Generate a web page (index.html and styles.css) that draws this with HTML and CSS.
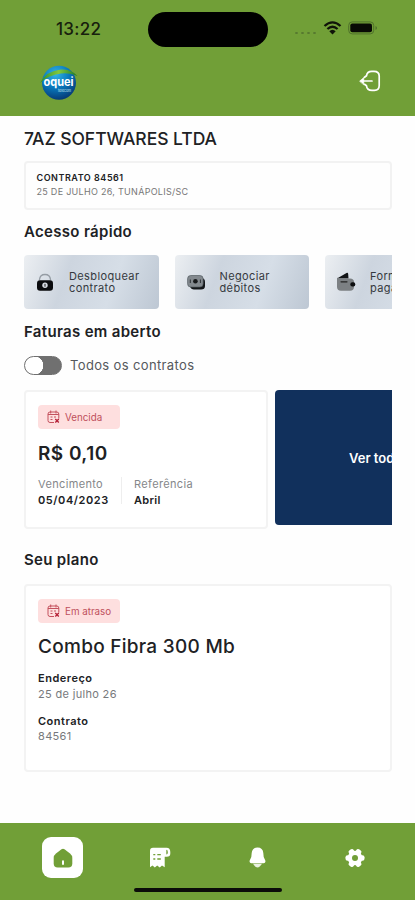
FILE: index.html
```html
<!DOCTYPE html>
<html lang="pt-BR">
<head>
<meta charset="utf-8">
<title>Oquei</title>
<link rel="stylesheet" href="styles.css">
</head>
<body>
<header class="header">
  <div class="status">
    <span class="time">13:22</span>
    <span class="island"></span>
    <span class="signals">
      <i class="cell"><b></b><b></b><b></b><b></b></i>
      <svg class="wifi" width="19" height="14" viewBox="0 0 19 14"><path d="M1.500 5Q9.500-2.300 17.500 5M4.400 8Q9.500 3.400 14.600 8" fill="none" stroke="#101409" stroke-width="2.300"/><path d="M6.300 10.300Q9.500 7.300 12.700 10.300L9.500 13.600Z" fill="#101409"/></svg>
      <svg class="battery" width="30" height="14" viewBox="0 0 30 14"><rect x=".7" y=".9" width="25" height="12" rx="3.500" fill="none" stroke="#4f712b" stroke-width="1"/><rect x="2.300" y="2.500" width="21.700" height="8.800" rx="2" fill="#080a05"/><path d="M27.500 5v4q1.500-.6 1.500-2t-1.500-2Z" fill="#4f712b"/></svg>
    </span>
  </div>
  <div class="topbar">
    <svg class="logo" width="40" height="36" viewBox="0 0 40 36">
      <defs><radialGradient id="globe" cx=".4" cy=".25" r=".8"><stop offset="0" stop-color="#35b4e4"/><stop offset=".5" stop-color="#0878bc"/><stop offset="1" stop-color="#06346f"/></radialGradient>
      <linearGradient id="leaf"><stop offset="0" stop-color="#278c32"/><stop offset=".5" stop-color="#83c83d"/><stop offset="1" stop-color="#19772d"/></linearGradient></defs>
      <circle cx="20" cy="17.700" r="17" fill="url(#globe)"/>
      <path d="M1 18Q7 6 22 4.500 32 3.500 38.500 11 31 7.500 22 8.500 9 10 1 18Z" fill="url(#leaf)"/>
      <text x="4.500" y="21" class="logo-name" textLength="30" lengthAdjust="spacingAndGlyphs">oquei</text>
      <text x="19" y="26.500" class="logo-sub" textLength="13" lengthAdjust="spacingAndGlyphs">telecom</text>
    </svg>
    <svg class="logout" width="22" height="22" viewBox="0 0 22 22" fill="none" stroke="#fff" stroke-width="1.700" stroke-linecap="round" stroke-linejoin="round"><path d="M5.500 7.300 7.500 5.800Q8 1.300 12.800 1.300H15Q20.200 1.300 20.200 6V15.500Q20.200 20.300 15.500 20.300H13Q8 20.300 7.500 15.800L5.500 14.300"/><path d="M2 11H13"/><path d="m.8 11 4-3.500v7Z" fill="#fff" stroke-width=".6"/></svg>
  </div>
</header>

<main class="content">
  <h1 class="company">7AZ SOFTWARES LTDA</h1>
  <section class="contract">
    <strong>CONTRATO 84561</strong>
    <span>25 DE JULHO 26, TUNÁPOLIS/SC</span>
  </section>

  <h2 class="heading quick-title">Acesso rápido</h2>
  <div class="quick">
    <div class="quick-card">
      <svg width="18" height="20" viewBox="0 0 18 20"><path d="M3.500 8.300V7.500Q4 2.500 9 2.500T14.500 7.500V8.300" fill="none" stroke="#959ca4" stroke-width="1.300"/><rect x="1" y="8.300" width="16" height="10.400" rx="3" fill="#0b0c0e"/><circle cx="9" cy="13.300" r="2.700" fill="#d7dce2"/><path d="M9 11.900v2.800" stroke="#222" stroke-width="1"/></svg>
      <span>Desbloquear<br>contrato</span>
    </div>
    <div class="quick-card">
      <svg width="18" height="20" viewBox="0 0 18 20"><path d="M5 6h9q4 0 4 4v4q0 3.500-4 3.500H7q-3 0-4-3Z" fill="#14171a"/><rect x=".6" y="3.500" width="15.500" height="11.500" rx="3.200" fill="#83898e" stroke="#555d63" stroke-width=".7"/><circle cx="8.400" cy="9.200" r="2.300" fill="#17191b"/><path d="M3.300 7.500v3.500M13.400 7.500v3.500" stroke="#303539" stroke-width="1"/></svg>
      <span>Negociar<br>débitos</span>
    </div>
    <div class="quick-card">
      <svg width="20" height="20" viewBox="0 0 20 20"><path d="M1 6.500 10.500 1q1.500-.6 1.700 1l.3 4.500Z" fill="#111315"/><path d="M1 5.500Q2 6.500 4 6.500H14Q18 6.500 18 10V15Q18 18.700 14 18.700H5Q1 18.700 1 15Z" fill="#7c8083"/><path d="M5 9.800h6" stroke="#222" stroke-width="1.200" stroke-linecap="round"/><rect x="14.300" y="10.300" width="5" height="4.200" rx="2" fill="#0c0e10"/></svg>
      <span>Formas de<br>pagamento</span>
    </div>
  </div>

  <h2 class="heading bills-title">Faturas em aberto</h2>
  <div class="filter"><span class="switch"></span><span class="filter-label">Todos os contratos</span></div>
  <div class="bills">
    <article class="card bill">
      <div class="badge">
        <svg width="13" height="14" viewBox="0 0 13 14" fill="none" stroke="#c4515d" stroke-width="1"><path d="M7 12.500H3Q1 12.500 1 10.500V4Q1 2 3 2H9.700Q11.800 2 11.800 4V8.500M3.700.5v3M9 .5v3M1 4.500h10.800M3.500 7h2M7 7h2M3.500 9.500h2"/><path d="m8.300 9 3.500 3.500m0-3.500-3.500 3.500" stroke="#b51f36" stroke-width="1.300"/></svg>
        <span class="overdue">Vencida</span>
      </div>
      <strong class="amount">R$ 0,10</strong>
      <div class="details">
        <div class="detail due"><span>Vencimento</span><strong>05/04/2023</strong></div>
        <div class="detail ref"><span>Referência</span><strong>Abril</strong></div>
      </div>
    </article>
    <div class="see-all"><span>Ver todas</span></div>
  </div>

  <h2 class="heading plan-title">Seu plano</h2>
  <article class="card plan">
    <div class="badge">
      <svg width="13" height="14" viewBox="0 0 13 14" fill="none" stroke="#c4515d" stroke-width="1"><path d="M7 12.500H3Q1 12.500 1 10.500V4Q1 2 3 2H9.700Q11.800 2 11.800 4V8.500M3.700.5v3M9 .5v3M1 4.500h10.800M3.500 7h2M7 7h2M3.500 9.500h2"/><path d="m8.300 9 3.500 3.500m0-3.500-3.500 3.500" stroke="#b51f36" stroke-width="1.300"/></svg>
      <span class="late">Em atraso</span>
    </div>
    <h3 class="plan-name">Combo Fibra 300 Mb</h3>
    <div class="info address"><strong>Endereço</strong><span>25 de julho 26</span></div>
    <div class="info number"><strong>Contrato</strong><span>84561</span></div>
  </article>
</main>

<nav class="nav">
  <div class="tabs">
    <a class="tab active"><svg width="20" height="20" viewBox="0 0 20 20"><path d="M3 5.500 8.500 1.200q1.500-1.100 3 0L17 5.500q2.300 1.800 2.300 4.500v5.500q0 4-4 4H4.700q-4 0-4-4V10Q.7 7.300 3 5.500Z" fill="#719f37"/><path d="M10 13.300v2.700" stroke="#fff" stroke-width="2" stroke-linecap="round"/></svg></a>
    <a class="tab"><svg width="22" height="21" viewBox="0 0 22 21"><path d="M4 .7H17.500Q21.300.7 21.300 5V6.500Q21.300 9.700 17.800 9.700H15.700V20.300L13 18.600 10.700 20.500 8.200 18.600 5.800 20.500 3.500 18.600 1 20.300V4Q1 .7 4 .7Z" fill="#fff"/><path d="M17.300 2.700q1.500 0 1.500 2.300v.8q0 1.800-1.500 1.800Z" fill="#719f37"/><path d="M4.300 7.700h2M8.300 7.700h3.500M4.300 12h2M8.300 12h3.500" stroke="#719f37" stroke-width="1.300"/></svg></a>
    <a class="tab"><svg width="17" height="21" viewBox="0 0 17 21"><path d="M8.500.5Q13.800.5 14.300 6L14.700 10 16.300 13.500Q17 15.900 14.500 16.300H2.500Q0 15.900.7 13.500L2.300 10 2.700 6Q3.200.5 8.500.5Z" fill="#fff"/><path d="M4 16.800h9q-2.300 3.700-4.500 3.700t-4.500-3.700Z" fill="#fff" opacity=".85"/></svg></a>
    <a class="tab"><svg width="20" height="20" viewBox="0 0 20 20"><g fill="#fff"><circle cx="10" cy="10" r="7.300"/><rect x="7.200" y=".5" width="5.600" height="19" rx="2" transform="rotate(30 10 10)"/><rect x="7.200" y=".5" width="5.600" height="19" rx="2" transform="rotate(90 10 10)"/><rect x="7.200" y=".5" width="5.600" height="19" rx="2" transform="rotate(150 10 10)"/></g><circle cx="10" cy="10" r="3" fill="#719f37"/></svg></a>
  </div>
  <div class="home-indicator"></div>
</nav>
</body>
</html>
```
FILE: styles.css
```css
* { box-sizing: border-box; }
body {
  width: 415px; height: 900px; margin: 0; overflow: hidden;
  display: flex; flex-direction: column;
  font-family: Inter, "Liberation Sans", sans-serif;
  color: #202124; background: #fefefe;
}
h1, h2, h3 { margin: 0; }
svg { display: block; flex: none; }

.header { flex: none; height: 116px; background: #719f37; }
.status { display: flex; align-items: center; height: 58px; padding-left: 56px; }
.time { width: 92px; font-size: 17px; line-height: 20px; letter-spacing: .3px; font-weight: 500; color: #17200d; }
.island { width: 120px; height: 35px; border-radius: 18px; background: #000; }
.signals { display: flex; align-items: center; margin-left: 27px; }
.cell { display: flex; gap: 3px; width: 28px; padding-top: 8px; }
.cell b { width: 3px; height: 2px; border-radius: 50%; background: #56782f; }
.wifi, .battery { margin-top: -2px; }
.battery { margin-left: 6px; }
.topbar { display: flex; justify-content: space-between; padding: 7px 34px 0 39px; }
.logout { margin-top: 5px; }
.logo-name { font-size: 12px; font-weight: 700; fill: #fff; }
.logo-sub { font-size: 4px; fill: #c7e5f1; }

.content { flex: 1; min-height: 0; padding: 12px 23px 0 24px; }
.company { font-size: 17.500px; line-height: 22px; font-weight: 500; letter-spacing: -.04px; white-space: nowrap; }
.contract {
  display: flex; flex-direction: column; height: 49px; margin-top: 11px;
  padding: 8px 10.500px; border: 2px solid #f2f2f2; border-radius: 4px;
  font-size: 9px; line-height: 13.500px;
}
.contract strong { font-weight: 600; letter-spacing: .53px; }
.contract span { color: #777; letter-spacing: .29px; }
.heading { font-size: 15px; line-height: 20px; font-weight: 600; letter-spacing: .32px; }
.quick-title { margin-top: 12px; }
.quick { display: flex; gap: 16px; height: 54px; margin-top: 13px; overflow: hidden; }
.quick-card {
  flex: 0 0 134.500px; display: flex; align-items: center; padding-left: 11px; border-radius: 4px;
  background: linear-gradient(110deg, #eceff2 0%, #cdd5df 32%, #d6dee7 65%, #bdc7d3 100%);
}
.quick-card svg { width: 20px; }
.quick-card span { margin-left: 14px; font-size: 11px; line-height: 12px; letter-spacing: .38px; color: #35393e; white-space: nowrap; }
.bills-title { margin-top: 13px; }
.filter { display: flex; align-items: center; height: 20px; margin-top: 13px; }
.switch { width: 38px; height: 19px; border-radius: 10px; border: 1px solid #707070; background: radial-gradient(circle at 9px 50%, #fff 9px, #707070 9.500px); }
.filter-label { margin-left: 8px; font-size: 13px; letter-spacing: .36px; color: #55585c; white-space: nowrap; }
.bills { display: flex; gap: 7px; height: 139px; margin-top: 15px; overflow: hidden; }
.card { border: 2px solid #f3f3f3; border-radius: 4px; padding: 13px 12px; background: #fff; }
.bill { flex: 0 0 244px; height: 139px; }
.badge { display: flex; align-items: center; gap: 5px; width: 82px; height: 24px; padding-left: 9px; border-radius: 4px; background: #fedfdf; color: #be505c; font-size: 9.800px; }
.amount { display: block; margin-top: 13px; font-size: 19px; line-height: 24px; font-weight: 600; letter-spacing: .45px; }
.details { display: flex; margin-top: 11px; }
.detail { display: flex; flex-direction: column; font-size: 11px; line-height: 15.500px; letter-spacing: .35px; white-space: nowrap; }
.detail span { color: #85878a; }
.detail strong { font-weight: 600; letter-spacing: .58px; }
.detail.ref strong { letter-spacing: .3px; }
.due { width: 84px; height: 27px; border-right: 1px solid #eee; }
.ref { margin-left: 12px; }
.see-all { flex: 0 0 244px; height: 135px; padding-left: 74px; display: flex; align-items: center; border-radius: 4px; background: #11305c; color: #fff; font-size: 13px; font-weight: 600; }
.plan-title { margin-top: 21px; }
.plan { height: 188px; margin-top: 14px; }
.plan-name { margin-top: 12px; font-size: 19px; line-height: 24px; font-weight: 500; letter-spacing: .28px; white-space: nowrap; }
.info { display: flex; flex-direction: column; font-size: 11px; line-height: 15.500px; letter-spacing: .32px; }
.info strong { font-weight: 600; letter-spacing: .5px; }
.info span { color: #77797c; }
.address { margin-top: 12px; }
.number { margin-top: 11.500px; }

.nav { flex: none; height: 77px; padding-top: 14px; background: #719f37; }
.tabs { display: flex; padding-left: 42px; gap: 56.500px; }
.tab { display: flex; align-items: center; justify-content: center; width: 41px; height: 41px; border-radius: 9px; }
.active { background: #fff; }
.home-indicator { width: 148px; height: 4px; margin: 10px 0 0 134px; border-radius: 2px; background: #0b0c09; }
```
